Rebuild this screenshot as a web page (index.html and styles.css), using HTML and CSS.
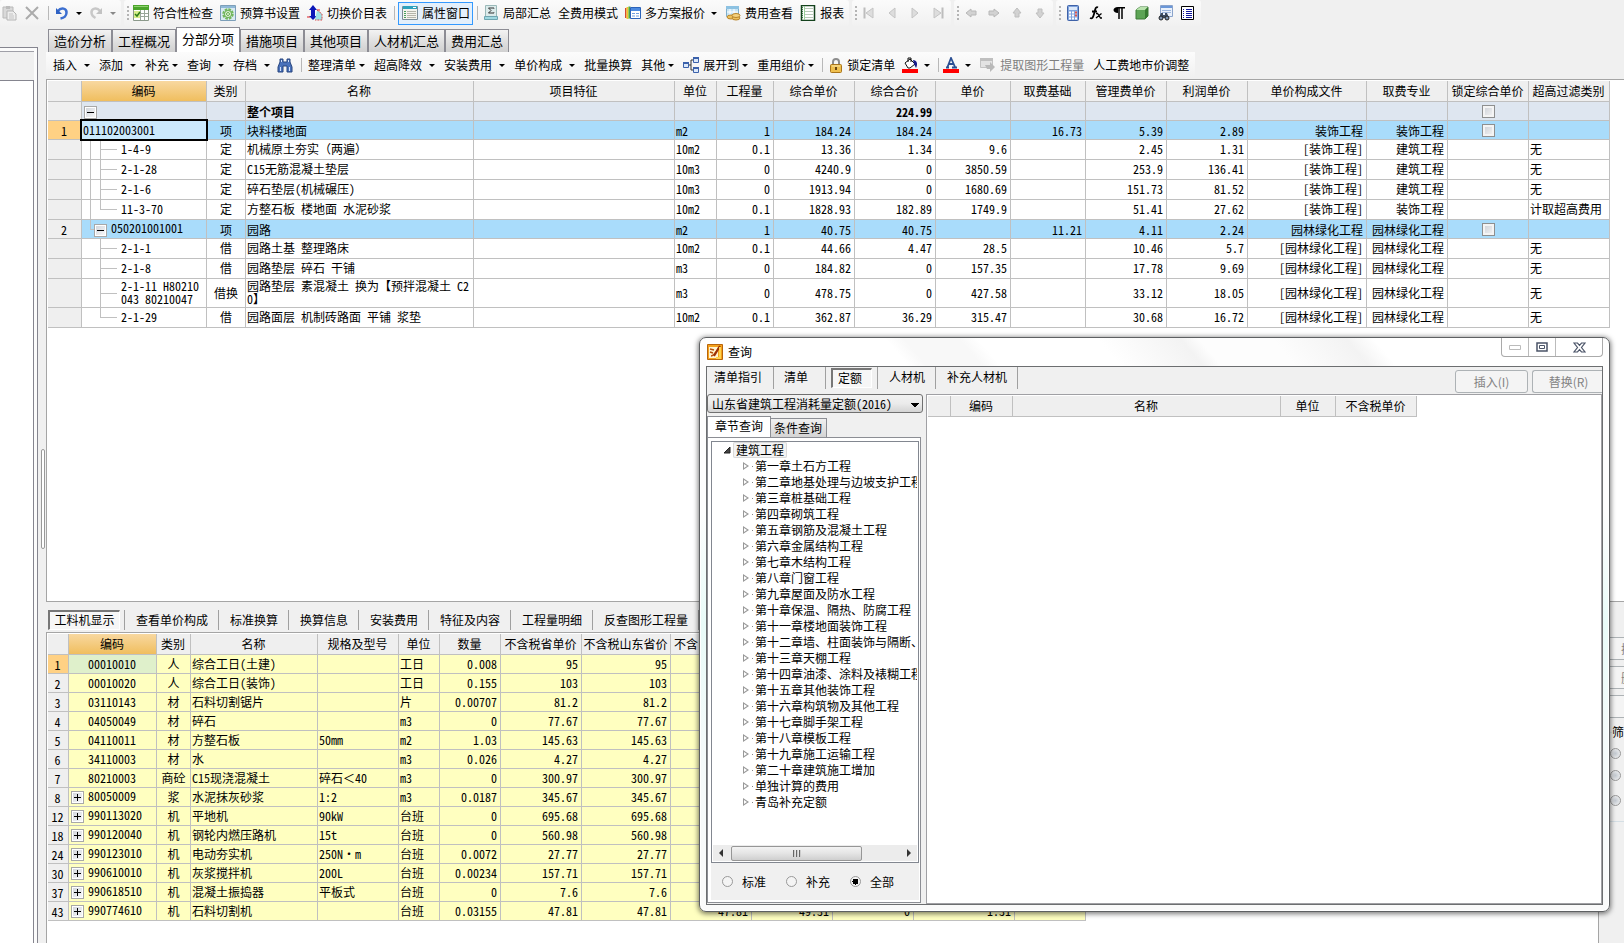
FILE: index.html
```html
<!DOCTYPE html>
<html lang="zh-CN">
<head>
<meta charset="utf-8">
<title>分部分项</title>
<link rel="stylesheet" href="styles.css">
</head>
<body>
<div class="app">
  <header class="topbar">
    <div class="strip strip-edit">
      <button class="ico" aria-label="粘贴"><svg width="16" height="16" viewBox="0 0 16 16"><path d="M2 2h10v11H2z" fill="#d9d9d9" stroke="#b9b9b9"/><path d="M5 1h4v3H5z" fill="#bbb"/><path d="M6 6h6l3 3v6H6z" fill="#eee" stroke="#b5b5b5"/><path d="M8 9h4M8 11h5M8 13h5" stroke="#c4c4c4"/></svg></button>
      <button class="ico" aria-label="删除"><svg width="16" height="16" viewBox="0 0 16 16"><path d="M2 2l12 12M14 2L2 14" stroke="#ababab" stroke-width="2"/></svg></button>
      <span class="sep"></span>
      <button class="ico" aria-label="撤销"><svg width="14" height="14" viewBox="0 0 14 14"><path d="M3 5c3-4 9-3 8.500 2-.3 3-3 5-6 5.500" fill="none" stroke="#3c6fd0" stroke-width="2.500"/><path d="M1 2v6h6z" fill="#2f62c4"/></svg></button>
      <i class="arrow"></i>
      <button class="ico" aria-label="重做"><svg width="14" height="14" viewBox="0 0 14 14"><path d="M11 5c-3-4-9-3-8.500 2 .3 3 2 4 4 5" fill="none" stroke="#c8c8c8" stroke-width="2.500"/><path d="M13 2v6H7z" fill="#c2c2c2"/></svg></button>
      <i class="arrow dim"></i>
    </div>
    <div class="strip strip-main">
      <span class="grip"></span>
      <button class="tool"><svg width="16" height="16" viewBox="0 0 16 16"><path d="M.5.5h15v15H.5z" fill="#fff" stroke="#8b998b"/><path d="M0 0h16v5H0z" fill="#4aa52b"/><path d="M1 1h14v1H1z" fill="#8fd06f"/><path d="M7.500 5v10M11.500 5v10M1 8.500h14M1 11.500h14" stroke="#9aa79a"/><path d="M1 6h6v7H1z" fill="#d9ee8e"/><path d="M2 9l2 2 3-4" fill="none" stroke="#2c7d17" stroke-width="1.500"/></svg>符合性检查</button>
      <button class="tool"><svg width="16" height="16" viewBox="0 0 16 16"><path d="M.5.5h15v15H.5z" fill="#d9eaf2" stroke="#7d9fb9"/><path d="M1 1h14v2H1z" fill="#8fb9d8"/><circle cx="8" cy="9" r="4.500" fill="none" stroke="#73b85c" stroke-width="2.500" stroke-dasharray="2.500 1"/><circle cx="8" cy="9" r="3.500" fill="#e9f6e2" stroke="#63ac4d"/><circle cx="8" cy="9" r="1.500" fill="none" stroke="#63ac4d"/></svg>预算书设置</button>
      <button class="tool"><svg width="16" height="16" viewBox="0 0 16 16"><path d="M6 0l4 5H8v6h2l-4 4-4-4h2V5H2z" fill="#0b16b8"/><path d="M0 12h3M13 5h-3" stroke="#d22"/><path d="M10 5l5 4v6h-7" fill="#9fe3e6" stroke="#d84b4b" stroke-dasharray="2 1"/></svg>切换价目表</button>
      <span class="sep"></span>
      <button class="tool pressed"><svg width="16" height="16" viewBox="0 0 16 16"><path d="M.5 1.500h15v13H.5z" fill="#f4f4ee" stroke="#7b8d98"/><path d="M1 1h14v3H1z" fill="#2da1bd"/><path d="M11 2.500h3" stroke="#fff"/><path d="M2 6.500h2M2 8.500h2M2 10.500h2M2 12.500h2" stroke="#46a15d"/><path d="M5 6.500h9M5 8.500h9M5 10.500h9M5 12.500h9" stroke="#b5b5aa"/></svg>属性窗口</button>
      <span class="sep"></span>
      <button class="tool"><svg width="16" height="16" viewBox="0 0 16 16"><path d="M2.500.5h11v11h-11z" fill="#dcebeb" stroke="#9ab9b9"/><path d="M11 3.500V3H5.500L8 5.500 5.500 8H11v-.5" fill="none" stroke="#333"/><path d="M1.500 11.500h13v3h-13z" fill="#9fd8e0" stroke="#6fa5b0"/></svg>局部汇总</button>
      <button class="tool">全费用模式</button>
      <button class="tool"><svg width="16" height="16" viewBox="0 0 16 16"><path d="M.5 3v10" stroke="#d6492e" stroke-width="2"/><path d="M2.500 2v12" stroke="#efc62b" stroke-width="2"/><path d="M4.500 1.500v12" stroke="#48ab49" stroke-width="2"/><path d="M5.500 2.500h10v11h-10z" fill="#fff" stroke="#2c63ba"/><path d="M6 3h9v3H6z" fill="#4c8ae0"/><path d="M7 8.500h3M11 8.500h3M7 11h3M11 11h3" stroke="#6f9ee0"/></svg>多方案报价<i class="arrow"></i></button>
      <button class="tool"><svg width="16" height="16" viewBox="0 0 16 16"><path d="M1.500 1.500h12v10h-12z" fill="#c6e4f4" stroke="#7eaecb"/><path d="M1 1h13v3H1z" fill="#8dc2e2"/><path d="M5 4v7M9 4v7M2 7h11" stroke="#fff"/><ellipse cx="6" cy="12" rx="4" ry="2" fill="#edc15c" stroke="#b9852b"/><ellipse cx="11" cy="13" rx="4" ry="2" fill="#edc15c" stroke="#b9852b"/><ellipse cx="11" cy="10.500" rx="4" ry="2" fill="#f4d27e" stroke="#b9852b"/></svg>费用查看</button>
      <button class="tool"><svg width="16" height="16" viewBox="0 0 16 16"><path d="M1.500.5h13v15h-13z" fill="#fff" stroke="#14421c" stroke-width="1.500"/><path d="M4.500 1v14" stroke="#9ad09a"/><path d="M5 3.500h8M5 6.500h8M5 9.500h8M5 12.500h8" stroke="#b8c9b8"/><path d="M2.500 2v12" stroke="#3b7a46" stroke-dasharray="1 1"/></svg>报表</button>
    </div>
    <div class="strip strip-nav">
      <span class="grip"></span>
      <button class="nav" aria-label="首条"><svg width="14" height="14" viewBox="0 0 14 14"><path d="M2.500 1.500v11" stroke="#bdbdbd" stroke-width="2"/><path d="M4 7l7-5v10z" fill="#ddd" stroke="#c4c4c4"/></svg></button>
      <button class="nav" aria-label="上一条"><svg width="14" height="14" viewBox="0 0 14 14"><path d="M4 7l6-5v10z" fill="#ddd" stroke="#c4c4c4"/></svg></button>
      <button class="nav" aria-label="下一条"><svg width="14" height="14" viewBox="0 0 14 14"><path d="M10 7L4 2v10z" fill="#ddd" stroke="#c4c4c4"/></svg></button>
      <button class="nav" aria-label="末条"><svg width="14" height="14" viewBox="0 0 14 14"><path d="M11.500 1.500v11" stroke="#bdbdbd" stroke-width="2"/><path d="M10 7L3 2v10z" fill="#ddd" stroke="#c4c4c4"/></svg></button>
    </div>
    <div class="strip strip-nav">
      <span class="grip"></span>
      <button class="nav" aria-label="左移"><svg width="12" height="12" viewBox="0 0 12 12"><path d="M1 6l5-4v2h5v4H6v2z" fill="#d2d2d2" stroke="#b8b8b8"/></svg></button>
      <button class="nav" aria-label="右移"><svg width="12" height="12" viewBox="0 0 12 12"><path d="M11 6L6 2v2H1v4h5v2z" fill="#d2d2d2" stroke="#b8b8b8"/></svg></button>
      <button class="nav" aria-label="上移"><svg width="12" height="12" viewBox="0 0 12 12"><path d="M6 1l4 5H8v4H4V6H2z" fill="#d2d2d2" stroke="#bfbfbf"/></svg></button>
      <button class="nav" aria-label="下移"><svg width="12" height="12" viewBox="0 0 12 12"><path d="M6 11l4-5H8V2H4v4H2z" fill="#d2d2d2" stroke="#bfbfbf"/></svg></button>
    </div>
    <div class="strip strip-nav">
      <span class="grip"></span>
      <button class="nav" aria-label="计算器"><svg width="14" height="16" viewBox="0 0 14 16"><rect x="1.500" y=".5" width="11" height="15" rx="1" fill="#7fa3dd" stroke="#3f62a8"/><path d="M3 2h8v3H3z" fill="#dbe8fa"/><path d="M3 7.500h8M3 10.500h8M3 13.500h8" stroke="#fff" stroke-width="2" stroke-dasharray="2 1"/><path d="M9 7.500h2M9 10.500h2" stroke="#d9534a" stroke-width="2"/></svg></button>
      <button class="nav" aria-label="函数"><svg width="14" height="14" viewBox="0 0 14 14"><path d="M9 1.500C6.500 0 6 4 5 8s-2 5-4 4M3 5.500h5" fill="none" stroke="#000" stroke-width="1.800"/><path d="M7 7.500h1.500l3 4.500H13M12.500 7.500L7 12" stroke="#000" stroke-width="1.300" fill="none"/></svg></button>
      <button class="nav" aria-label="段落标记"><svg width="14" height="14" viewBox="0 0 14 14"><path d="M7 1h6v1.500H6V7C0 7 0 1 6 1z" fill="#000"/><path d="M7 1v12M10 1v12" stroke="#000" stroke-width="1.500"/></svg></button>
      <button class="nav" aria-label="模型"><svg width="14" height="14" viewBox="0 0 14 14"><path d="M1 4l4-3h8v9l-3 3H1z" fill="#5da455" stroke="#3d7a37"/><path d="M1 4l4-3h8l-3 3z" fill="#b9e2ae"/><path d="M10 4l3-3v9l-3 3z" fill="#367a30"/></svg></button>
      <button class="nav" aria-label="查找"><svg width="16" height="16" viewBox="0 0 16 16"><path d="M3.500.5h12v11h-12z" fill="#eaf1fb" stroke="#8aa3cb"/><path d="M4 1h11v2H4z" fill="#6b97d8"/><path d="M5 5.500h9M5 7.500h9" stroke="#9db7dd"/><path d="M4 8h2v2h2V8h2l2 5H2z" fill="#3c4c62"/><circle cx="4" cy="13" r="2" fill="#7d95b2" stroke="#222"/><circle cx="10" cy="13" r="2" fill="#7d95b2" stroke="#222"/></svg></button>
      <button class="nav" aria-label="目录"><svg width="13" height="14" viewBox="0 0 13 14"><path d="M.5.5h12v13H.5z" fill="#fff" stroke="#000"/><path d="M2 3.500h1M2 5.500h1M2 7.500h1M2 9.500h1M2 11.500h1M5 3.500h6M5 5.500h6M5 7.500h6M5 9.500h6M5 11.500h6" stroke="#13189b"/></svg></button>
    </div>
  </header>

  <div class="body">
    <aside class="side"><div class="side-in"><div class="side-head"></div><div class="side-page"></div></div></aside>
    <div class="splitter"><span class="handle"></span></div>
    <main class="main">
      <nav class="tabs">
        <button class="tab">造价分析</button><button class="tab">工程概况</button><button class="tab on">分部分项</button><button class="tab">措施项目</button><button class="tab">其他项目</button><button class="tab">人材机汇总</button><button class="tab">费用汇总</button>
      </nav>
      <div class="tools2">
        <div class="strip2">
        <button class="cmd">插入<i class="arrow wide"></i></button>
        <button class="cmd">添加<i class="arrow wide"></i></button>
        <button class="cmd">补充<i class="arrow near"></i></button>
        <button class="cmd">查询<i class="arrow wide"></i></button>
        <button class="cmd">存档<i class="arrow wide"></i></button>
        <button class="cmd bare" aria-label="查找"><svg width="16" height="15" viewBox="0 0 16 15"><path d="M3 1h3v3h4V1h3v3l2 5v5h-5V8H6v6H1V9l2-5z" fill="#4a72bb" stroke="#26447f"/><path d="M3.500 9v4M12.500 9v4M4.500 2v2M11.500 2v2" stroke="#d4e2fa"/></svg></button>
        <span class="sep"></span>
        <button class="cmd">整理清单<i class="arrow near"></i></button>
        <button class="cmd">超高降效<i class="arrow wide"></i></button>
        <button class="cmd">安装费用<i class="arrow wide"></i></button>
        <button class="cmd">单价构成<i class="arrow wide"></i></button>
        <button class="cmd">批量换算</button>
        <button class="cmd">其他<i class="arrow near"></i></button>
        <button class="cmd"><svg width="16" height="16" viewBox="0 0 16 16"><path d="M5 8h3M8 3v10M8 3h3M8 13h3" stroke="#333" fill="none"/><path d="M.5 5.500h5v5h-5zM10.500.5h5v5h-5zM10.500 10.500h5v5h-5z" fill="#dce9fb" stroke="#3c62ab"/><path d="M0 6h6M10 1h6M10 11h6" stroke="#3c62ab" stroke-width="2"/></svg>展开到<i class="arrow near"></i></button>
        <button class="cmd">重用组价<i class="arrow near"></i></button>
        <span class="sep"></span>
        <button class="cmd"><svg width="14" height="15" viewBox="0 0 14 15"><path d="M4 7V4a3 3 0 0 1 6 0v3" fill="none" stroke="#8d8d8d" stroke-width="2"/><rect x="1.500" y="6.500" width="11" height="8" rx="1" fill="#efbf4d" stroke="#a9741a"/><path d="M3 8h8" stroke="#fbe6a6"/><path d="M7 9v3" stroke="#6b4710" stroke-width="2"/></svg>锁定清单</button>
        <button class="cmd bare" aria-label="填充颜色"><svg width="16" height="16" viewBox="0 0 16 16"><path d="M3 6l5-4 5 5-5 4H6z" fill="#fff" stroke="#111"/><path d="M6 5V1h3v4" fill="none" stroke="#111"/><path d="M11 3c4 0 5 4 3 8l-2-4z" fill="#161a8a"/><path d="M0 12h16v4H0z" fill="#f00"/></svg><i class="arrow side-arrow"></i></button>
        <span class="sep"></span>
        <button class="cmd bare" aria-label="字体颜色"><svg width="16" height="16" viewBox="0 0 16 16"><path d="M3 10.500h3M9 10.500h5M4.500 10L8 1l4 9M6 7h5" fill="none" stroke="#2b4f93" stroke-width="1.800"/><path d="M0 12h16v4H0z" fill="#f00"/></svg><i class="arrow side-arrow"></i></button>
        <button class="cmd" disabled><svg width="16" height="16" viewBox="0 0 16 16"><path d="M.5 1.500h12v9H.5z" fill="#e3e3e3" stroke="#c3c3c3"/><path d="M0 1h13v3H0z" fill="#bfbfbf"/><path d="M5 8h5V5l5 5-5 5v-3H7z" fill="#b9b9b9"/></svg>提取图形工程量</button>
        <button class="cmd">人工费地市价调整</button>
        </div>
      </div>

      <section class="grid-pane">
        <table class="grid bill">
          <colgroup><col class="w34"><col class="w125"><col class="w39"><col class="w228"><col class="w201"><col class="w42"><col class="w57"><col class="w81"><col class="w81"><col class="w75"><col class="w75"><col class="w81"><col class="w81"><col class="w119"><col class="w81"><col class="w81"><col class="w81"></colgroup>
          <thead><tr><th></th><th class="key">编码</th><th>类别</th><th>名称</th><th>项目特征</th><th>单位</th><th>工程量</th><th>综合单价</th><th>综合合价</th><th>单价</th><th>取费基础</th><th>管理费单价</th><th>利润单价</th><th>单价构成文件</th><th>取费专业</th><th>锁定综合单价</th><th>超高过滤类别</th></tr></thead>
          <tbody>
          <tr class="sum"><td></td><td class="root"><button class="exp minus" aria-label="折叠"></button></td><td></td><td>整个项目</td><td></td><td></td><td></td><td></td><td class="n">224.99</td><td></td><td></td><td></td><td></td><td></td><td></td><td class="c"><input type="checkbox" aria-label="锁定"></td><td></td></tr>
          <tr class="item"><td class="sel">1</td><td class="edit"><input type="text" value="011102003001" aria-label="编码"></td><td class="c">项</td><td>块料楼地面</td><td></td><td>m2</td><td class="n">1</td><td class="n">184.24</td><td class="n">184.24</td><td></td><td class="n">16.73</td><td class="n">5.39</td><td class="n">2.89</td><td class="n">装饰工程</td><td class="n">装饰工程</td><td class="c"><input type="checkbox" aria-label="锁定"></td><td></td></tr>
          <tr><td></td><td class="leaf outer">1-4-9</td><td class="c">定</td><td>机械原土夯实（两遍）</td><td></td><td>10m2</td><td class="n">0.1</td><td class="n">13.36</td><td class="n">1.34</td><td class="n">9.6</td><td></td><td class="n">2.45</td><td class="n">1.31</td><td class="n">[装饰工程]</td><td class="n">建筑工程</td><td></td><td>无</td></tr>
          <tr><td></td><td class="leaf outer">2-1-28</td><td class="c">定</td><td>C15无筋混凝土垫层</td><td></td><td>10m3</td><td class="n">0</td><td class="n">4240.9</td><td class="n">0</td><td class="n">3850.59</td><td></td><td class="n">253.9</td><td class="n">136.41</td><td class="n">[装饰工程]</td><td class="n">建筑工程</td><td></td><td>无</td></tr>
          <tr><td></td><td class="leaf outer">2-1-6</td><td class="c">定</td><td>碎石垫层(机械碾压)</td><td></td><td>10m3</td><td class="n">0</td><td class="n">1913.94</td><td class="n">0</td><td class="n">1680.69</td><td></td><td class="n">151.73</td><td class="n">81.52</td><td class="n">[装饰工程]</td><td class="n">建筑工程</td><td></td><td>无</td></tr>
          <tr><td></td><td class="leaf outer last">11-3-70</td><td class="c">定</td><td>方整石板 楼地面 水泥砂浆</td><td></td><td>10m2</td><td class="n">0.1</td><td class="n">1828.93</td><td class="n">182.89</td><td class="n">1749.9</td><td></td><td class="n">51.41</td><td class="n">27.62</td><td class="n">[装饰工程]</td><td class="n">装饰工程</td><td></td><td>计取超高费用</td></tr>
          <tr class="item"><td>2</td><td class="branch"><button class="exp minus" aria-label="折叠"></button>050201001001</td><td class="c">项</td><td>园路</td><td></td><td>m2</td><td class="n">1</td><td class="n">40.75</td><td class="n">40.75</td><td></td><td class="n">11.21</td><td class="n">4.11</td><td class="n">2.24</td><td class="n">园林绿化工程</td><td class="n">园林绿化工程</td><td class="c"><input type="checkbox" aria-label="锁定"></td><td></td></tr>
          <tr><td></td><td class="leaf">2-1-1</td><td class="c">借</td><td>园路土基 整理路床</td><td></td><td>10m2</td><td class="n">0.1</td><td class="n">44.66</td><td class="n">4.47</td><td class="n">28.5</td><td></td><td class="n">10.46</td><td class="n">5.7</td><td class="n">[园林绿化工程]</td><td class="n">园林绿化工程</td><td></td><td>无</td></tr>
          <tr><td></td><td class="leaf">2-1-8</td><td class="c">借</td><td>园路垫层 碎石 干铺</td><td></td><td>m3</td><td class="n">0</td><td class="n">184.82</td><td class="n">0</td><td class="n">157.35</td><td></td><td class="n">17.78</td><td class="n">9.69</td><td class="n">[园林绿化工程]</td><td class="n">园林绿化工程</td><td></td><td>无</td></tr>
          <tr class="tall"><td></td><td class="leaf">2-1-11 H80210<br>043 80210047</td><td class="c">借换</td><td>园路垫层 素混凝土 换为【预拌混凝土 C2<br>0】</td><td></td><td>m3</td><td class="n">0</td><td class="n">478.75</td><td class="n">0</td><td class="n">427.58</td><td></td><td class="n">33.12</td><td class="n">18.05</td><td class="n">[园林绿化工程]</td><td class="n">园林绿化工程</td><td></td><td>无</td></tr>
          <tr><td></td><td class="leaf last">2-1-29</td><td class="c">借</td><td>园路面层 机制砖路面 平铺 浆垫</td><td></td><td>10m2</td><td class="n">0.1</td><td class="n">362.87</td><td class="n">36.29</td><td class="n">315.47</td><td></td><td class="n">30.68</td><td class="n">16.72</td><td class="n">[园林绿化工程]</td><td class="n">园林绿化工程</td><td></td><td>无</td></tr>
          </tbody>
        </table>
      </section>

      <section class="detail">
        <div class="detail-main">
          <nav class="subtabs">
            <button class="subtab on">工料机显示</button><span class="lead"></span><button class="subtab">查看单价构成</button><button class="subtab">标准换算</button><button class="subtab">换算信息</button><button class="subtab">安装费用</button><button class="subtab">特征及内容</button><button class="subtab">工程量明细</button><button class="subtab">反查图形工程量</button>
          </nav>
          <div class="res-pane">
            <table class="grid res">
              <colgroup><col class="w21"><col class="w88"><col class="w34"><col class="w127"><col class="w81"><col class="w41"><col class="w61"><col class="w81"><col class="w89"><col class="w81"><col class="w81"><col class="w81"><col class="w101"><col class="w71"></colgroup>
              <thead><tr><th></th><th class="key">编码</th><th>类别</th><th>名称</th><th>规格及型号</th><th>单位</th><th>数量</th><th>不含税省单价</th><th>不含税山东省价</th><th class="l">不含</th><th></th><th></th><th></th><th></th></tr></thead>
              <tbody>
              <tr><td class="sel">1</td><td class="code cur">00010010</td><td class="c">人</td><td>综合工日(土建)</td><td></td><td>工日</td><td class="n">0.008</td><td class="n">95</td><td class="n">95</td><td></td><td></td><td></td><td></td><td></td></tr>
              <tr><td>2</td><td class="code">00010020</td><td class="c">人</td><td>综合工日(装饰)</td><td></td><td>工日</td><td class="n">0.155</td><td class="n">103</td><td class="n">103</td><td></td><td></td><td></td><td></td><td></td></tr>
              <tr><td>3</td><td class="code">03110143</td><td class="c">材</td><td>石料切割锯片</td><td></td><td>片</td><td class="n">0.00707</td><td class="n">81.2</td><td class="n">81.2</td><td></td><td></td><td></td><td></td><td></td></tr>
              <tr><td>4</td><td class="code">04050049</td><td class="c">材</td><td>碎石</td><td></td><td>m3</td><td class="n">0</td><td class="n">77.67</td><td class="n">77.67</td><td></td><td></td><td></td><td></td><td></td></tr>
              <tr><td>5</td><td class="code">04110011</td><td class="c">材</td><td>方整石板</td><td>50mm</td><td>m2</td><td class="n">1.03</td><td class="n">145.63</td><td class="n">145.63</td><td></td><td></td><td></td><td></td><td></td></tr>
              <tr><td>6</td><td class="code">34110003</td><td class="c">材</td><td>水</td><td></td><td>m3</td><td class="n">0.026</td><td class="n">4.27</td><td class="n">4.27</td><td></td><td></td><td></td><td></td><td></td></tr>
              <tr><td>7</td><td class="code">80210003</td><td class="c">商砼</td><td>C15现浇混凝土</td><td>碎石＜40</td><td>m3</td><td class="n">0</td><td class="n">300.97</td><td class="n">300.97</td><td></td><td></td><td></td><td></td><td></td></tr>
              <tr><td>8</td><td class="code x"><button class="exp plus" aria-label="展开"></button>80050009</td><td class="c">浆</td><td>水泥抹灰砂浆</td><td>1:2</td><td>m3</td><td class="n">0.0187</td><td class="n">345.67</td><td class="n">345.67</td><td></td><td></td><td></td><td></td><td></td></tr>
              <tr><td>12</td><td class="code x"><button class="exp plus" aria-label="展开"></button>990113020</td><td class="c">机</td><td>平地机</td><td>90kW</td><td>台班</td><td class="n">0</td><td class="n">695.68</td><td class="n">695.68</td><td></td><td></td><td></td><td></td><td></td></tr>
              <tr><td>18</td><td class="code x"><button class="exp plus" aria-label="展开"></button>990120040</td><td class="c">机</td><td>钢轮内燃压路机</td><td>15t</td><td>台班</td><td class="n">0</td><td class="n">560.98</td><td class="n">560.98</td><td></td><td></td><td></td><td></td><td></td></tr>
              <tr><td>24</td><td class="code x"><button class="exp plus" aria-label="展开"></button>990123010</td><td class="c">机</td><td>电动夯实机</td><td>250N・m</td><td>台班</td><td class="n">0.0072</td><td class="n">27.77</td><td class="n">27.77</td><td></td><td></td><td></td><td></td><td></td></tr>
              <tr><td>30</td><td class="code x"><button class="exp plus" aria-label="展开"></button>990610010</td><td class="c">机</td><td>灰浆搅拌机</td><td>200L</td><td>台班</td><td class="n">0.00234</td><td class="n">157.71</td><td class="n">157.71</td><td></td><td></td><td></td><td></td><td></td></tr>
              <tr><td>37</td><td class="code x"><button class="exp plus" aria-label="展开"></button>990618510</td><td class="c">机</td><td>混凝土振捣器</td><td>平板式</td><td>台班</td><td class="n">0</td><td class="n">7.6</td><td class="n">7.6</td><td></td><td></td><td></td><td></td><td></td></tr>
              <tr><td>43</td><td class="code x"><button class="exp plus" aria-label="展开"></button>990774610</td><td class="c">机</td><td>石料切割机</td><td></td><td>台班</td><td class="n">0.03155</td><td class="n">47.81</td><td class="n">47.81</td><td class="n">47.81</td><td class="n">49.31</td><td class="n">0</td><td class="n">1.31</td><td></td></tr>
              </tbody>
            </table>
          </div>
        </div>
        <aside class="actions">
          <button class="act" disabled>插</button>
          <button class="act" disabled>删</button>
          <button class="act" disabled aria-label="其他"></button>
          <fieldset class="filter"><legend>筛</legend>
            <input type="radio" name="filter" aria-label="筛选一"><input type="radio" name="filter" aria-label="筛选二"><input type="radio" name="filter" aria-label="筛选三">
          </fieldset>
        </aside>
      </section>
    </main>
  </div>
</div>

<div class="dialog" role="dialog" aria-label="查询">
  <div class="title">
    <svg width="16" height="16" viewBox="0 0 16 16"><path d="M.5.5h15v15H.5z" fill="#f5a21c" stroke="#b8640a"/><path d="M2 3h9v11H2z" fill="#fff3d0"/><path d="M3 5l4 1M3 8l3 1M4 12c3 0 5-4 8-9" fill="none" stroke="#b8500a" stroke-width="1.500"/><path d="M7 12L13 2" stroke="#9c2f06" stroke-width="2"/><path d="M13 3v11H9" fill="none" stroke="#ffd44f" stroke-width="2"/></svg>
    <h1>查询</h1>
    <div class="winbtns">
      <button aria-label="最小化"><svg width="12" height="5" viewBox="0 0 12 5"><path d="M.5.5h11v4H.5z" fill="#fff" stroke="#bbb"/></svg></button><button aria-label="最大化"><svg width="12" height="10" viewBox="0 0 12 10"><path d="M1 1h10v8H1z" fill="#fff" stroke="#4b5468" stroke-width="1.500"/><path d="M3.500 3.500h5v3h-5z" fill="none" stroke="#4b5468"/></svg></button><button class="close" aria-label="关闭"><svg width="13" height="11" viewBox="0 0 13 11"><path d="M1 1h3.500l2 2.300L8.500 1H12L8.500 5.500 12 10H8.500l-2-2.300-2 2.300H1l3.500-4.500z" fill="#fff" stroke="#4b5468" stroke-width="1.200"/></svg></button>
    </div>
  </div>
  <div class="client">
    <div class="dtop">
      <nav class="dtabs"><button>清单指引</button><button>清单</button><button class="on"><span>定额</span></button><button>人材机</button><button>补充人材机</button></nav>
      <div class="dacts"><button disabled>插入(I)</button><button class="cut" disabled>替换(R)</button></div>
    </div>
    <div class="dbody">
      <div class="dleft">
        <select class="combo" aria-label="定额库"><option>山东省建筑工程消耗量定额(2016)</option></select>
        <nav class="ltabs"><button class="on">章节查询</button><button>条件查询</button></nav>
        <div class="lpane">
          <div class="treebox">
            <ul class="tree">
              <li class="top"><svg width="8" height="8" viewBox="0 0 8 8"><path d="M7 1v6H1z" fill="#444" stroke="#222"/></svg><span>建筑工程</span></li>
              <li>第一章土石方工程</li><li>第二章地基处理与边坡支护工程</li><li>第三章桩基础工程</li><li>第四章砌筑工程</li><li>第五章钢筋及混凝土工程</li><li>第六章金属结构工程</li><li>第七章木结构工程</li><li>第八章门窗工程</li><li>第九章屋面及防水工程</li><li>第十章保温、隔热、防腐工程</li><li>第十一章楼地面装饰工程</li><li>第十二章墙、柱面装饰与隔断、</li><li>第十三章天棚工程</li><li>第十四章油漆、涂料及裱糊工程</li><li>第十五章其他装饰工程</li><li>第十六章构筑物及其他工程</li><li>第十七章脚手架工程</li><li>第十八章模板工程</li><li>第十九章施工运输工程</li><li>第二十章建筑施工增加</li><li>单独计算的费用</li><li>青岛补充定额</li>
            </ul>
            <div class="hscroll"><i class="sl"></i><div class="thumb"><i></i><i></i><i></i></div><i class="sr"></i></div>
          </div>
          <div class="radios">
            <label><input type="radio" name="scope">标准</label><label><input type="radio" name="scope">补充</label><label><input type="radio" name="scope" checked>全部</label>
          </div>
        </div>
      </div>
      <div class="dright">
        <table class="grid quota"><colgroup><col class="w23"><col class="w62"><col class="w268"><col class="w55"><col class="w81"></colgroup>
          <thead><tr><th></th><th>编码</th><th>名称</th><th>单位</th><th>不含税单价</th></tr></thead></table>
      </div>
    </div>
  </div>
</div>
</body>
</html>
```

FILE: styles.css
```css
* { box-sizing: border-box; }
html, body { height: 100%; }
body {
  margin: 0;
  position: relative;
  overflow: hidden;
  background: #f0f0f0;
  color: #000;
  font: 12px/16px "Noto Sans Mono CJK SC", "Noto Sans CJK SC", sans-serif;
}
button, input, select {
  font: inherit;
  color: inherit;
  margin: 0;
  padding: 0;
  border: 0;
  background: none;
  white-space: nowrap;
}
svg { display: block; flex: none; }
.app { height: 100%; display: flex; flex-direction: column; }

/* top toolbars */
.topbar { display: flex; gap: 3px; height: 27px; }
.strip {
  display: flex;
  align-items: center;
  flex: none;
  height: 26px;
  background: linear-gradient(#fbfbfb, #f1f1f1);
  border-radius: 3px;
}
.strip-edit { width: 121px; gap: 7px; padding-left: 1px; }
.strip-edit .sep { margin: 0 -1px 0 1px; }
.strip-main { width: 725px; padding-left: 3px; }
.strip-nav { padding: 0 2px 0 3px; }
.grip {
  flex: none;
  width: 2px;
  height: 15px;
  background: repeating-linear-gradient(#b4b4b4 0 2px, transparent 2px 4px);
}
.strip-main .grip { margin-right: 4px; }
.sep { width: 1px; height: 14px; background: #b8b8b8; flex: none; }
.tool, .cmd { display: flex; align-items: center; flex: none; }
.tool { gap: 4px; margin-right: 7px; }
.tool.pressed { height: 23px; padding: 0 2px 0 3px; margin: 0 4px 0 3px; border: 1px solid #3399ff; background: #e3effb; }
.sep + .tool:not(.pressed) { margin-left: 5px; }
.arrow {
  display: inline-block;
  border: 3px solid transparent;
  border-top-color: #000;
  border-bottom: 0;
  flex: none;
}
.arrow.dim { border-top-color: #888; }
.tool .arrow { margin: 0 1px 0 2px; }
.nav { width: 23px; height: 22px; display: grid; place-items: center; }

/* frame */
.body { flex: 1; min-height: 0; display: flex; }
.side {
  width: 38px;
  margin-top: 20px;
  padding: 3px 3px 0 0;
  border: 1px solid #85858f;
  border-width: 1px 1px 0 0;
  background: #fbfbfb;
}
.side-in { height: 100%; display: flex; flex-direction: column; border-top: 1px solid #a0a0a8; }
.side-head { height: 28px; background: #f0f0f0; }
.side-page { flex: 1; border: 1px solid #85858f; border-width: 1px 1px 0 0; background: #fff; }
.splitter { width: 8px; padding: 27px 0 0 1px; display: flex; align-items: center; justify-content: center; }
.handle { width: 4px; height: 100px; border: 1px solid #999; border-radius: 2px; background: #fff; }
.main { flex: 1; min-width: 0; display: flex; flex-direction: column; }

.tabs { display: flex; align-items: flex-end; height: 25px; padding-left: 2px; }
.tab {
  height: 23px;
  padding: 0 5px;
  font-size: 13px;
  border: 1px solid #8c8c94;
  border-bottom: 0;
  background: linear-gradient(#f3f3f3, #ddd 60%, #d0d0d0);
}
.tab.on { height: 25px; padding-bottom: 2px; background: #fff; }
.tools2 { height: 27px; display: flex; }
.strip2 {
  display: flex;
  align-items: center;
  height: 26px;
  padding: 0 6px 0 7px;
  background: linear-gradient(#fcfcfc, #f0f0f0);
}
.cmd { margin-right: 9px; }
.cmd svg { margin-right: 4px; }
.cmd.bare { margin-left: -2px; }
.cmd.bare svg { margin-right: 0; }
.arrow.wide { margin-left: 7px; }
.arrow.near { margin-left: 3px; }
.arrow.side-arrow { margin-left: 6px; }
.strip2 .sep { margin: 0 6px 0 -1px; }
.cmd:disabled { color: #7f7f7f; }
.cmd:last-child { margin-right: 0; }

/* grids */
.grid-pane {
  flex: none;
  height: 523px;
  padding: 1px 0 0 1px;
  border: 1px solid #a5a5a5;
  border-right: 0;
  background: #fff;
}
.grid { table-layout: fixed; border-collapse: separate; border-spacing: 0; width: 0; }
.grid th, .grid td {
  padding: 0 3px 1px 1px;
  border: solid #c0c0c0;
  border-width: 0 1px 1px 0;
  white-space: nowrap;
  overflow: hidden;
  font-weight: normal;
  line-height: 13px;
  text-align: left;
}
.grid th { height: 21px; padding: 0 1px 1px 0; text-align: center; background: #efefef; }
.grid th.l { text-align: left; padding-left: 3px; }
.grid th.key { background: linear-gradient(#f8d8a0, #f0be5e); }
.grid td:first-child { padding: 0 1px 0 0; text-align: center; background: #efefef; }
.grid td.sel { background: #ffd184; }
.grid td.c { padding: 0 0 1px; text-align: center; }
.grid td.n { text-align: right; }
.bill td { height: 20px; }
.bill td:not(:first-child) { padding-bottom: 2px; }
.bill .tall td { height: 29px; }
.bill .sum td, .bill .item td { height: 19px; padding-bottom: 0; }
.bill .sum td:not(:first-child) { background-color: #dee6f0; font-weight: bold; }
.bill .item td:not(:first-child) { background-color: #a9dcfb; }
.bill .item td.edit { position: relative; overflow: visible; padding: 0; }
.edit input {
  display: block;
  width: 100%;
  height: 18px;
  padding: 0 1px 2px;
  background: #cbe9fc;
  outline: 2px solid #000;
}
.bill .leaf {
  padding-left: 39px;
  background:
    linear-gradient(#c0c0c0, #c0c0c0) 18px 50% / 17px 1px no-repeat,
    linear-gradient(#c0c0c0, #c0c0c0) 18px 0 / 1px 100% no-repeat;
}
.bill .leaf.outer {
  background:
    linear-gradient(#c0c0c0, #c0c0c0) 18px 50% / 17px 1px no-repeat,
    linear-gradient(#c0c0c0, #c0c0c0) 18px 0 / 1px 100% no-repeat,
    linear-gradient(#c0c0c0, #c0c0c0) 8px 0 / 1px 100% no-repeat;
}
.bill .leaf.last { background-size: 17px 1px, 1px 50%, 1px 100%; }
.bill .branch {
  padding-left: 12px;
  background: linear-gradient(#c0c0c0, #c0c0c0) 8px 0 / 1px 50% no-repeat, linear-gradient(#c0c0c0, #c0c0c0) 8px 50% / 5px 1px no-repeat;
}
.bill .root { padding-left: 2px; }
.exp {
  width: 13px;
  height: 13px;
  border: 1px solid #a8a8a8;
  vertical-align: middle;
  background:
    linear-gradient(#000, #000) 50% 50% / 7px 1px no-repeat,
    linear-gradient(135deg, #cfd3da, #fafafa);
  box-shadow: inset 0 0 0 1px #fff;
}
.exp.plus {
  background:
    linear-gradient(#000, #000) 50% 50% / 7px 1px no-repeat,
    linear-gradient(#000, #000) 50% 50% / 1px 7px no-repeat,
    linear-gradient(135deg, #cfd3da, #fafafa);
}
.branch .exp { margin-right: 4px; }
input[type=checkbox] {
  appearance: none;
  display: block;
  width: 13px;
  height: 13px;
  margin: 0 auto;
  border: 1px solid #8e8f8f;
  background: linear-gradient(135deg, #cbcfd5, #f6f6f6);
  box-shadow: inset 0 0 0 2px #f4f4f4;
}

/* detail */
.detail { flex: 1; min-height: 0; display: flex; }
.detail-main { flex: 1; min-width: 0; display: flex; flex-direction: column; }
.subtabs { display: flex; align-items: center; height: 30px; padding: 5px 0 0 2px; }
.subtab { height: 20px; padding: 0 10px 0 11px; border-right: 1px solid #a0a0a0; flex: none; }
.subtab.on {
  width: 72px;
  padding: 0;
  border: 1px solid #fff;
  border-top: 2px solid #777;
  border-left: 2px solid #777;
  background: #f6f6f6;
}
.lead { width: 5px; height: 20px; border-right: 1px solid #a0a0a0; }
.res-pane {
  flex: 1;
  padding: 1px 0 0 1px;
  border: 1px solid #a5a5a5;
  border-bottom: 0;
  background: #fff;
  overflow: hidden;
}
.res td { height: 19px; }
.res td:not(:first-child) { background-color: #ffffc0; }
.res td.code { padding-left: 19px; }
.res td.code.x { padding-left: 2px; }
.res td.cur:not(:first-child) { background-color: #dff0cb; }
.x .exp { margin-right: 4px; }
.w21 { width: 21px; } .w23 { width: 23px; } .w34 { width: 34px; } .w39 { width: 39px; }
.w41 { width: 41px; } .w42 { width: 42px; } .w55 { width: 55px; } .w57 { width: 57px; }
.w61 { width: 61px; } .w62 { width: 62px; } .w71 { width: 71px; } .w75 { width: 75px; }
.w81 { width: 81px; } .w88 { width: 88px; } .w89 { width: 89px; } .w101 { width: 101px; }
.w119 { width: 119px; } .w125 { width: 125px; } .w127 { width: 127px; } .w201 { width: 201px; }
.w228 { width: 228px; } .w268 { width: 268px; }

.actions { width: 25px; padding: 35px 0 0 8px; display: flex; flex-direction: column; gap: 6px; overflow: hidden; }
.act {
  width: 80px;
  height: 23px;
  padding-left: 13px;
  text-align: left;
  color: #838383;
  border: 1px solid #adb2b5;
  border-radius: 3px;
  background: #f4f4f4;
  flex: none;
}
.filter { width: 80px; height: 98px; margin: 0; padding: 8px 0 0; border: 1px solid #d5dfe5; flex: none; display: flex; flex-direction: column; gap: 11px; min-width: 0; }
.filter legend { margin-left: 4px; padding: 0; }
input[type=radio] {
  appearance: none;
  width: 11px;
  height: 11px;
  border: 1px solid #999;
  border-radius: 50%;
  background: #f4f4f4;
  flex: none;
}
.filter input { margin-left: 2px; background: radial-gradient(#c5cbd2, #f4f4f4); }
.filter input:last-child { margin-top: 3px; }

/* query window */
.dialog {
  position: absolute;
  left: 699px;
  top: 337px;
  right: 14px;
  bottom: 31px;
  display: flex;
  flex-direction: column;
  padding: 0 6px 6px 6px;
  border: 1px solid #5e6062;
  border-radius: 7px;
  background: linear-gradient(#fdfdfd 0 30%, #e9fbf8 50%, #f4fafa 70%, #fafafa);
  box-shadow: 0 1px 5px 1px rgba(0, 0, 0, .5), inset 0 0 0 1px #fff;
}
.title {
  height: 28px;
  display: flex;
  align-items: center;
  gap: 5px;
  padding-left: 1px;
  background: linear-gradient(50deg, #fff 0 22%, #f8f8f8 24% 30%, #fff 32% 45%, #f3f3f3 54%, #fdfdfd 56% 64%, #f3f3f3 72%, #fff 75%);
}
.title h1 { margin: 0; padding-bottom: 1px; font: inherit; flex: 1; }
.winbtns { display: flex; align-self: flex-start; border: 1px solid #aaa; border-top: 0; border-radius: 0 0 4px 4px; }
.winbtns button { width: 27px; height: 18px; display: grid; place-items: center; border-right: 1px solid #bbb; }
.winbtns button.close { width: 46px; border: 0; }
.client {
  flex: 1;
  min-height: 0;
  display: flex;
  flex-direction: column;
  border: 1px solid #6c6e70;
  background: #f0f0f0;
}
.dtop { height: 27px; display: flex; justify-content: space-between; }
.dtabs { display: flex; height: 22px; }
.dtabs button { padding: 0 10px 2px 11px; border-right: 1px solid #a0a0a0; }
.dtabs button:first-child { padding: 0 11px 2px 7px; }
.dtabs button:nth-child(2) { padding: 0 17px 2px 10px; }
.dtabs button.on { padding: 0 5px; }
.dtabs .on span { display: block; height: 20px; padding: 0 9px 0 5px; border: 1px solid #fff; border-top: 2px solid #777; border-left: 2px solid #777; background: #f6f6f6; }
.dacts { display: flex; gap: 4px; padding-top: 3px; font-family: "Noto Sans CJK SC", sans-serif; }
.dacts button { width: 73px; height: 23px; color: #838383; border: 1px solid #adb2b5; border-radius: 3px; background: #f4f4f4; }
.dacts .cut { width: 70px; border-right: 0; border-radius: 3px 0 0 3px; padding-left: 2px; }
.dbody { flex: 1; min-height: 0; display: flex; gap: 3px; }
.dleft { width: 216px; display: flex; flex-direction: column; }
.combo {
  appearance: none;
  height: 19px;
  padding: 0 4px;
  line-height: 16px;
  border: 1px solid #707070;
  border-radius: 3px;
  background:
    linear-gradient(to bottom left, transparent 50%, #000 50%) 207px 8px / 4px 4px no-repeat,
    linear-gradient(#f2f2f2, #ebebeb 50%, #d4d4d4);
  background:
    conic-gradient(from -45deg at 50% 100%, #000 90deg, transparent 0) 203px 8px / 8px 4px no-repeat,
    linear-gradient(#f2f2f2, #ebebeb 50%, #d4d4d4);
}
.ltabs { display: flex; align-items: flex-end; height: 24px; }
.ltabs button { height: 19px; padding: 0 4px 1px 3px; border: 1px solid #8c8e94; border-left: 0; border-bottom: 0; background: linear-gradient(#f0f0f0, #d4d4d4); }
.ltabs .on { height: 21px; padding: 0 7px 3px; border-left: 1px solid #8c8e94; background: #fff; }
.lpane {
  flex: 1;
  min-height: 0;
  margin: 0 2px 1px 0;
  padding: 3px 1px 2px 3px;
  display: flex;
  flex-direction: column;
  border: 1px solid #8c8e94;
  background: #fff;
}
.treebox { flex: 1; min-height: 0; display: flex; flex-direction: column; border: 1px solid #828790; padding: 0 1px 1px; }
.tree { flex: 1; margin: 0; padding: 0; list-style: none; overflow: hidden; }
.tree li {
  position: relative;
  height: 16px;
  padding-left: 42px;
  white-space: nowrap;
}
.tree li:not(.top)::before {
  content: "";
  position: absolute;
  left: 30px;
  top: 4px;
  width: 6px;
  height: 8px;
  background: #999;
  clip-path: polygon(evenodd, 0 0, 100% 50%, 0 100%, 0 0, 1px 2px, 1px 6px, 4px 4px, 1px 2px);
}
.tree li:not(.top)::after { content: ""; position: absolute; left: 39px; top: 8px; width: 1px; height: 1px; background: #888; }
.tree .top { display: flex; align-items: center; gap: 2px; padding-left: 10px; }
.top span { padding: 0 3px; border-radius: 2px; line-height: 16px; box-shadow: inset 0 0 0 1px #d9d9d9; background: #f3f3f3; }
.hscroll { height: 16px; display: flex; align-items: center; background: #ececec; padding: 0 6px; }
.sl, .sr { border: 4px solid transparent; border-width: 4px 0; }
.sl { border-right: 4px solid #333; margin-right: 8px; }
.sr { border-left: 4px solid #333; margin-left: auto; }
.thumb { width: 131px; height: 15px; display: flex; gap: 1px; align-items: center; justify-content: center; border: 1px solid #969696; border-radius: 2px; background: linear-gradient(#f3f3f3, #e4e4e4 50%, #cfcfcf); }
.thumb i { width: 2px; height: 7px; background: #666; border-right: 1px solid #ccc; }
.radios { height: 37px; display: flex; align-items: center; gap: 17px; padding-left: 11px; background: #f0f0f0; }
.radios label { display: flex; align-items: center; gap: 9px; width: 47px; }
.radios input:checked { background: radial-gradient(#000 0 3px, #f4f4f4 3px); }
.dright { flex: 1; padding: 1px 0 0 1px; border: 1px solid #a0a0a4; background: #fff; }
```
